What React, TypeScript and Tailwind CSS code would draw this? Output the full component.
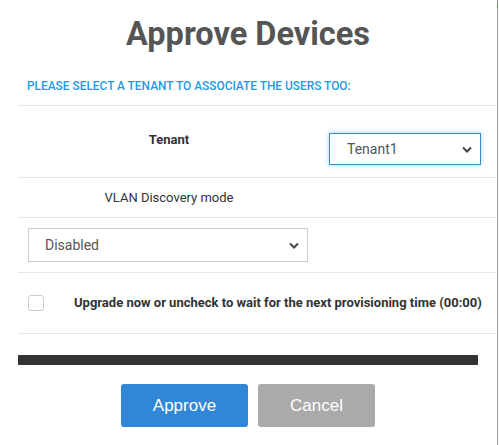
export default function App() {
  return (
    <div className="relative w-[499px] h-[445px] bg-white overflow-hidden font-['Roboto',sans-serif]">
      {/* right edge of the modal */}
      <div className="absolute right-[1px] top-0 h-full w-[1px] bg-[#9a9a9a]" />
      <div className="absolute right-[1px] top-[4px] h-[4px] w-[1px] bg-[#3cae3c]" />

      <h1 className="pt-[17px] pr-[3px] text-center text-[32.5px] leading-[35px] font-bold text-[#555555]">
        Approve Devices
      </h1>

      <div className="pl-[18px] w-[496px]">
        <p className="mt-[27px] pl-[9px] text-[11.9px] leading-[14px] font-medium text-[#1e9be6] uppercase">
          Please select a tenant to associate the users too:
        </p>

        <div className="mt-[12px] border-t border-[#e6e6e6]">
          {/* tenant row */}
          <div className="flex h-[72px] border-b border-[#e6e6e6]">
            <div className="w-[302px] pt-[24px] text-center text-[13px] font-bold text-[#333333]">
              Tenant
            </div>
            <div className="pl-[9px] pt-[27px]">
              <div className="flex items-center justify-between w-[152px] h-[32px] border border-[#3b8ec9] shadow-[0_0_5px_rgba(102,175,233,0.6)] pl-[17px] pr-[8px] text-[14px] text-[#555555]">
                <span>Tenant1</span>
                <Chevron />
              </div>
            </div>
          </div>

          {/* vlan label row */}
          <div className="flex items-center h-[40px] border-b border-[#e6e6e6]">
            <div className="w-[302px] text-center text-[13px] text-[#333333]">VLAN Discovery mode</div>
          </div>

          {/* vlan select row */}
          <div className="h-[55px] pl-[10px] pt-[10px] border-b border-[#e6e6e6]">
            <div className="flex items-center justify-between w-[280px] h-[34px] border border-[#cccccc] pl-[16px] pr-[8px] text-[14px] text-[#555555]">
              <span>Disabled</span>
              <Chevron />
            </div>
          </div>

          {/* upgrade row */}
          <div className="flex items-center h-[61px] pl-[10px] border-b border-[#e6e6e6]">
            <div className="w-[16px] h-[16px] rounded-[3px] border border-[#cccccc] bg-white" />
            <span className="ml-[30px] text-[13px] font-bold text-[#333333]">
              Upgrade now or uncheck to wait for the next provisioning time (00:00)
            </span>
          </div>
        </div>

        <div className="mt-[21px] w-[460px] h-[10px] bg-[#333333]" />
      </div>

      <div className="mt-[19px] flex justify-center gap-[10px] pr-[3px] font-['Liberation_Sans',Arial,sans-serif]">
        <button className="w-[127px] h-[43px] rounded-[3px] bg-[#3186d6] text-[17px] text-white">Approve</button>
        <button className="w-[117px] h-[43px] rounded-[3px] bg-[#aaaaaa] text-[17px] text-white">Cancel</button>
      </div>
    </div>
  );
}

function Chevron() {
  return (
    <svg width="10" height="7" viewBox="0 0 10 7" className="text-[#444444]">
      <path d="M1 1.5 L5 5.5 L9 1.5" fill="none" stroke="currentColor" strokeWidth="2" />
    </svg>
  );
}
